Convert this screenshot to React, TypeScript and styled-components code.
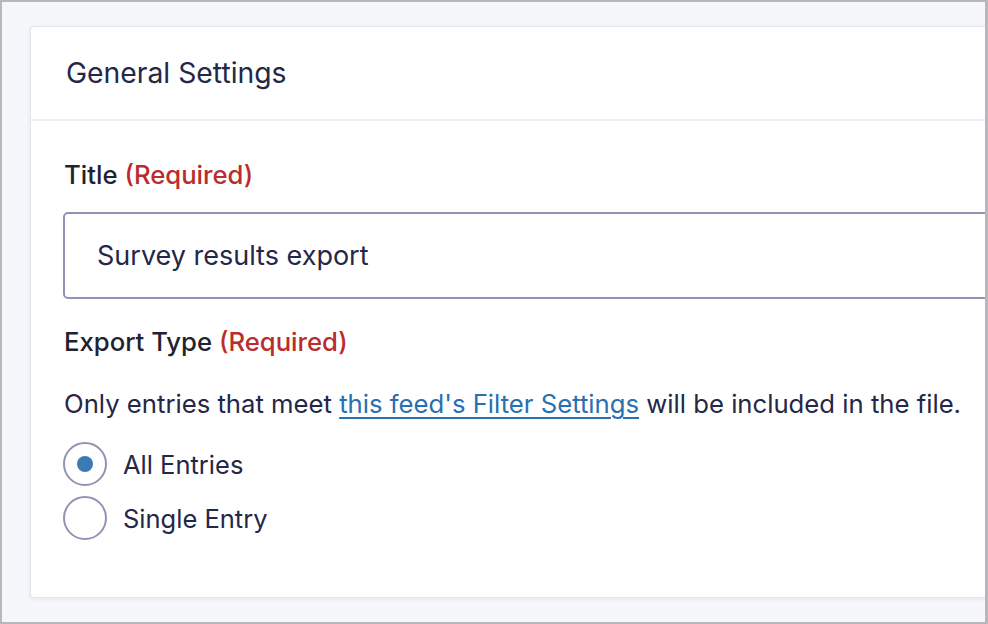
import React, { useState } from "react";
import styled, { createGlobalStyle } from "styled-components";

const GlobalStyle = createGlobalStyle`
    html, body {
        margin: 0;
        padding: 0;
        background: #ffffff;
    }
    * {
        box-sizing: border-box;
    }
`;

const Frame = styled.div`
    width: 988px;
    height: 624px;
    border: 2px solid #b8b8bc;
    border-right-width: 3px;
    background-color: #f6f7fb;
    padding: 24px 0 0 28px;
    overflow: hidden;
    font-family: Inter, "Noto Sans", sans-serif;
`;

const Card = styled.section`
    width: 1000px;
    height: 572px;
    background-color: #ffffff;
    border: 1px solid #e3e4ee;
    border-right: none;
    border-radius: 4px 0 0 4px;
    box-shadow: 0 1px 4px rgba(30, 34, 80, 0.08);
`;

const CardHeader = styled.header`
    height: 94px;
    display: flex;
    align-items: center;
    padding-left: 35px;
    border-bottom: 2px solid #ebebf2;
`;

const CardTitle = styled.h2`
    margin: 0;
    font-size: 28.3px;
    font-weight: 400;
    color: #242748;
`;

const CardBody = styled.div`
    padding: 39px 0 0 33px;
    display: flex;
    flex-direction: column;
`;

const Label = styled.label`
    font-size: 25.7px;
    font-weight: 460;
    color: #1f2330;
    line-height: 30px;
`;

const Required = styled.span`
    color: #b92d2d;
`;

const TextInput = styled.input`
    margin-top: 22px;
    margin-left: -1px;
    width: 960px;
    height: 87px;
    border: 2px solid #9193b3;
    border-radius: 5px;
    padding: 0 32px;
    font-family: Inter, "Noto Sans", sans-serif;
    font-size: 27px;
    color: #242748;
    outline: none;
`;

const Field = styled.div<{ $gap?: number }>`
    margin-top: ${({ $gap }) => $gap ?? 0}px;
    display: flex;
    flex-direction: column;
`;

const Description = styled.p`
    margin: 32px 0 0;
    font-size: 25.7px;
    line-height: 30px;
    color: #242748;

    a {
        color: #2a6fb0;
        text-decoration: underline;
        text-decoration-thickness: 2px;
        text-underline-offset: 4px;
    }
`;

const RadioGroup = styled.div`
    margin-top: 23px;
    display: flex;
    flex-direction: column;
    gap: 10px;
`;

const RadioRow = styled.label`
    display: flex;
    align-items: center;
    gap: 16px;
    cursor: pointer;
    font-size: 25.5px;
    color: #242748;
`;

const RadioCircle = styled.span<{ $checked: boolean }>`
    width: 44px;
    height: 44px;
    margin-left: -1px;
    border-radius: 50%;
    border: 2px solid #9193b3;
    display: flex;
    align-items: center;
    justify-content: center;
    background: #fff;
    flex-shrink: 0;

    &::after {
        content: "";
        width: 16px;
        height: 16px;
        border-radius: 50%;
        background-color: #3a7bb4;
        display: ${({ $checked }) => ($checked ? "block" : "none")};
    }
`;

const options = ["All Entries", "Single Entry"];

const App = () => {
    const [selected, setSelected] = useState("All Entries");

    return (
        <>
            <GlobalStyle />
            <Frame>
                <Card>
                    <CardHeader>
                        <CardTitle>General Settings</CardTitle>
                    </CardHeader>
                    <CardBody>
                        <Field>
                            <Label>
                                Title <Required>(Required)</Required>
                            </Label>
                            <TextInput defaultValue="Survey results export" />
                        </Field>
                        <Field $gap={28}>
                            <Label>
                                Export Type <Required>(Required)</Required>
                            </Label>
                            <Description>
                                Only entries that meet{" "}
                                <a href="#">this feed's Filter Settings</a> will
                                be included in the file.
                            </Description>
                            <RadioGroup>
                                {options.map((opt) => (
                                    <RadioRow
                                        key={opt}
                                        onClick={() => setSelected(opt)}
                                    >
                                        <RadioCircle $checked={selected === opt} />
                                        {opt}
                                    </RadioRow>
                                ))}
                            </RadioGroup>
                        </Field>
                    </CardBody>
                </Card>
            </Frame>
        </>
    );
};

export default App;
